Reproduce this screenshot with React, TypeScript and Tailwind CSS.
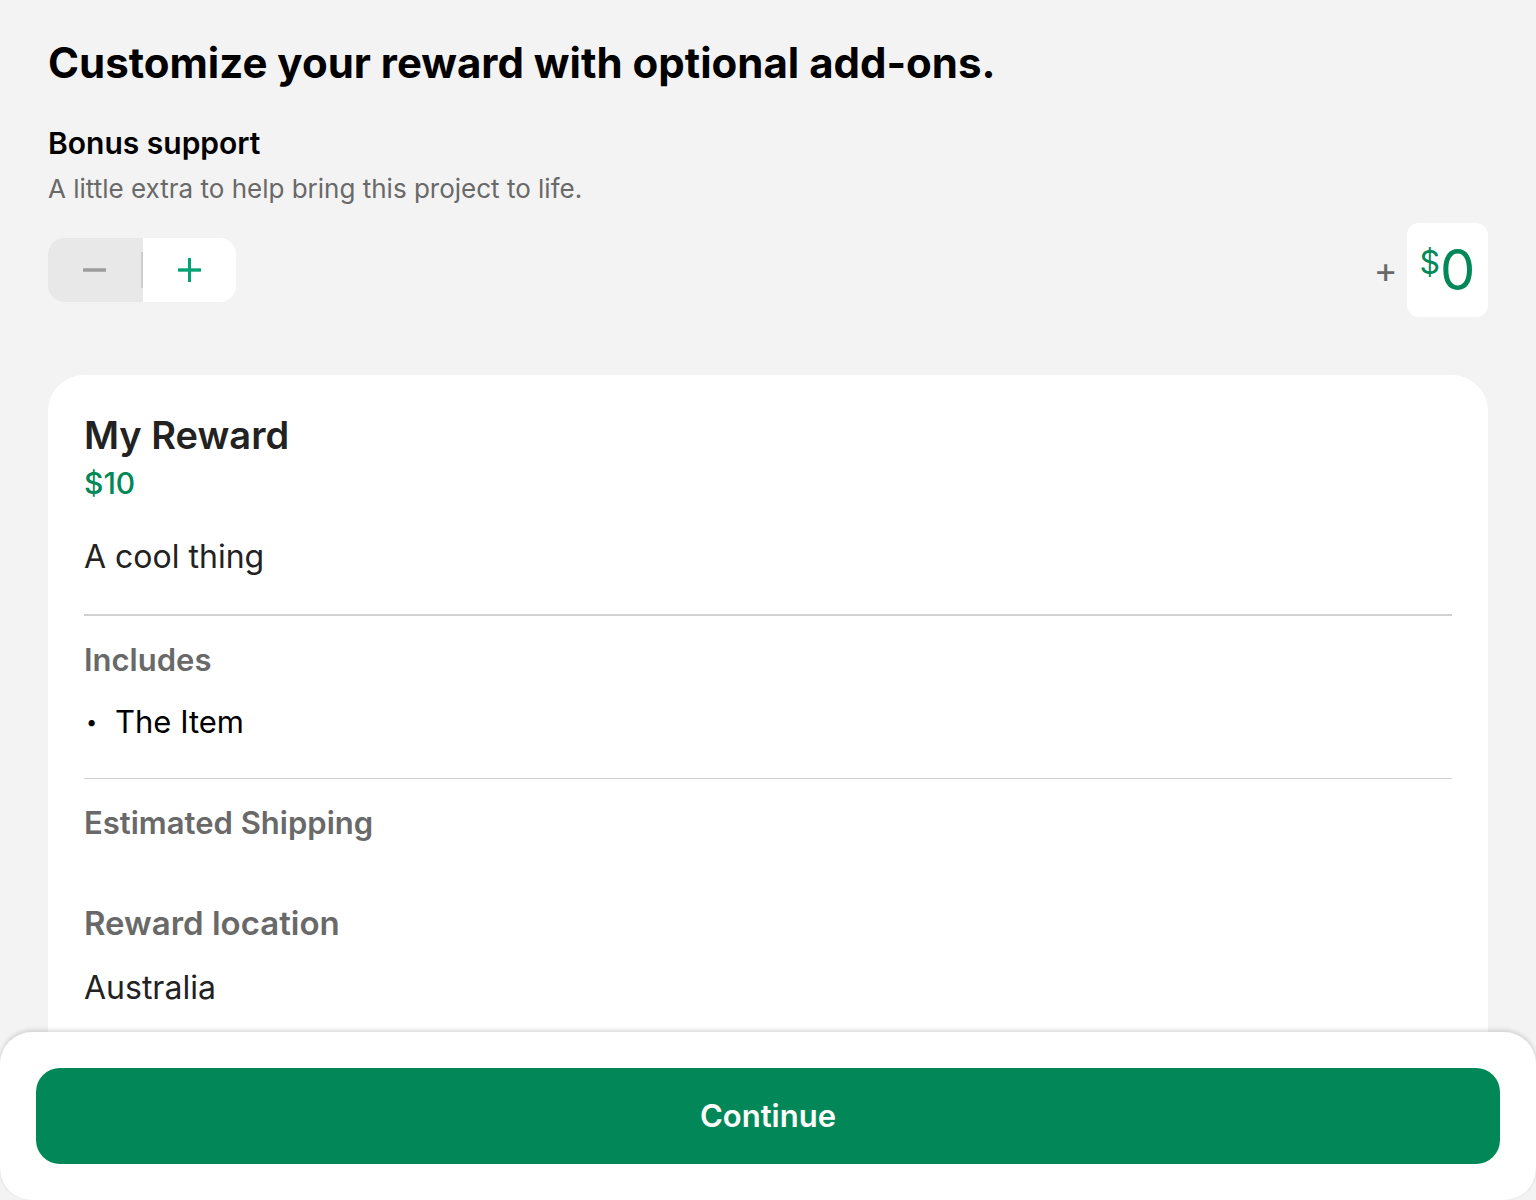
export default function App() {
  return (
    <main className="flex h-screen flex-col overflow-hidden bg-[#f3f3f3] font-['Inter',sans-serif] text-black">
      <div className="min-h-0 flex-1 overflow-y-auto px-12 pt-9 [scrollbar-width:none]">
        <h1 className="text-[42px] leading-[54px] font-bold">Customize your reward with optional add-ons.</h1>
        <section className="pt-[35px]">
          <h2 className="text-[30px] leading-9 font-semibold">Bonus support</h2>
          <p className="pt-3 text-[26px] leading-8 text-[#696969]">A little extra to help bring this project to life.</p>
          <div className="flex items-center justify-between pt-[18px]">
            <div className="flex h-16 w-47 overflow-hidden rounded-2xl bg-white">
              <button aria-label="Decrease bonus" disabled className="relative flex w-[95px] items-center justify-center bg-[#e8e8e8] pr-0.5">
                <svg className="h-6 w-6" viewBox="0 0 24 24" fill="#9b9d9c"><rect x="0" y="10" width="23" height="4" rx="1" opacity=".5" /><rect x="0" y="10.5" width="23" height="3" rx="0.5" /></svg>
                <span className="absolute top-3.5 right-0 h-9 w-0.5 bg-[#cdcdcd]" />
              </button>
              <button aria-label="Increase bonus" className="flex flex-1 items-center justify-center">
                <svg className="h-6 w-6" viewBox="0 0 24 24" fill="#03a274"><rect x="0" y="10" width="23" height="4" rx="1" opacity=".4" /><rect x="0" y="10.5" width="23" height="3" rx="0.5" /><rect x="10" y="0" width="3" height="24" rx="0.5" /></svg>
              </button>
            </div>
            <div className="flex items-center gap-2.5">
              <span className="text-[36px] leading-10 text-[#696969]">+</span>
              <label className="flex h-[94px] items-center rounded-xl bg-white px-3 text-[#028858]">
                <span className="self-start pt-5 text-[32px] leading-10">$</span>
                <input aria-label="Bonus amount" defaultValue="0" className="w-9 text-[56px] leading-[64px] outline-none" />
              </label>
            </div>
          </div>
        </section>
        <article className="mt-[58px] rounded-t-[36px] bg-white px-9 pt-9 pb-24 text-[#222]">
          <h2 className="text-[38px] leading-12 font-semibold">My Reward</h2>
          <p className="pt-1.5 text-[30px] leading-9 font-medium text-[#028858]">$10</p>
          <p className="pt-9 text-[32px] leading-10">A cool thing</p>
          <hr className="mt-[37px] border-t-2 border-[#d1d1d1]" />
          <h3 className="pt-6 text-[31px] leading-10 font-semibold text-[#696969]">Includes</h3>
          <ul className="pt-[22px] text-[31px] leading-10 text-black">
            <li className="flex"><span className="w-[31px] pl-0.5 text-[20px]" aria-hidden="true">•</span>The Item</li>
          </ul>
          <hr className="mt-9 border-t border-[#d1d1d1]" />
          <h3 className="pt-6 text-[31px] leading-10 font-semibold text-[#696969]">Estimated Shipping</h3>
          <h3 className="pt-15 text-[33px] leading-10 font-semibold text-[#696969]">Reward location</h3>
          <p className="pt-[25px] text-[32px] leading-10">Australia</p>
        </article>
      </div>
      <footer className="relative rounded-[32px] bg-white p-9 shadow-[0_-2px_4px_rgba(0,0,0,0.15)]">
        <button className="h-24 w-full rounded-3xl bg-[#028858] text-[31px] font-semibold text-white">Continue</button>
      </footer>
    </main>
  );
}
